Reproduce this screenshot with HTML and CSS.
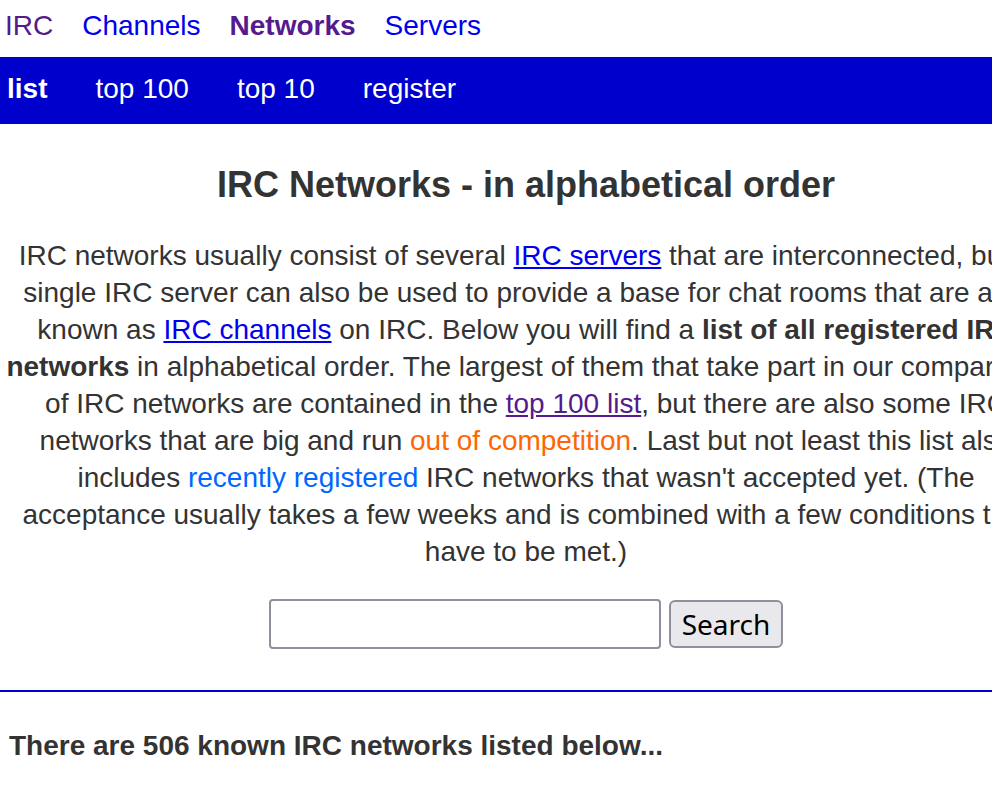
FILE: index.html
```html
<!DOCTYPE html>
<html lang="en">
<head>
    <meta charset="UTF-8">
    <title>IRC Networks - in alphabetical order</title>
    <link rel="stylesheet" href="styles.css">
</head>
<body>
    <div class="page">
        <nav class="topnav">
            <a href="#" class="visited">IRC</a>
            <a href="#">Channels</a>
            <a href="#" class="visited current">Networks</a>
            <a href="#">Servers</a>
        </nav>

        <nav class="subnav">
            <a href="#" class="current">list</a>
            <a href="#">top 100</a>
            <a href="#">top 10</a>
            <a href="#">register</a>
        </nav>

        <main class="content">
            <h1>IRC Networks - in alphabetical order</h1>

            <p class="intro">
                IRC networks usually consist of several <a href="#">IRC servers</a> that are interconnected, but a
                single IRC server can also be used to provide a base for chat rooms that are also known as
                <a href="#">IRC channels</a> on IRC. Below you will find a <b>list of all registered IRC networks</b>
                in alphabetical order. The largest of them that take part in our comparison of IRC networks are
                contained in the <a href="#" class="visited">top 100 list</a>, but there are also some IRC networks
                that are big and run <a href="#" class="ooc">out of competition</a>. Last but not least this list also
                includes <a href="#" class="recent">recently registered</a> IRC networks that wasn't accepted yet.
                (The acceptance usually takes a few weeks and is combined with a few conditions that have to be met.)
            </p>

            <form class="search" onsubmit="return false">
                <input type="text" name="q">
                <button type="submit">Search</button>
            </form>

            <hr>

            <h3 class="count">There are 506 known IRC networks listed below...</h3>
        </main>
    </div>
</body>
</html>
```

FILE: styles.css
```css
html, body {
    overflow-x: hidden;
}

body {
    margin: 0;
    font-family: "Liberation Sans", Arial, sans-serif;
    color: #333;
    background: #fff;
}

.page {
    width: 1052px;
}

a {
    color: #0000ee;
}

a.visited {
    color: #551a8b;
}

.topnav {
    display: flex;
    gap: 29px;
    padding: 10px 0 15px 5px;
    font-size: 28px;
    line-height: 32px;
}

.topnav a {
    text-decoration: none;
}

.topnav a.current {
    font-weight: bold;
}

.subnav {
    display: flex;
    gap: 48px;
    background: #0000cc;
    padding: 16px 0 19px 7px;
    font-size: 28px;
    line-height: 32px;
}

.subnav a {
    color: #fff;
    text-decoration: none;
}

.subnav a.current {
    font-weight: bold;
}

.content h1 {
    margin: 40px 0 0;
    font-size: 36px;
    line-height: 41px;
    text-align: center;
}

.intro {
    margin: 32px 0 0;
    padding: 0 4px;
    font-size: 28px;
    line-height: 37px;
    text-align: center;
}

.intro a.ooc {
    color: #ff6600;
    text-decoration: none;
}

.intro a.recent {
    color: #0066ff;
    text-decoration: none;
}

.search {
    display: flex;
    justify-content: center;
    align-items: center;
    gap: 8px;
    margin-top: 29px;
}

.search input {
    box-sizing: border-box;
    width: 392px;
    height: 50px;
    border: 2px solid #8f8f9d;
    border-radius: 4px;
    font-size: 28px;
    padding: 0 6px;
    background: #fff;
}

.search button {
    box-sizing: border-box;
    height: 48px;
    padding: 0 11px;
    border: 2px solid #8f8f9d;
    border-radius: 6px;
    background: #e9e9ed;
    color: #000;
    font-family: "Noto Sans", "Open Sans", sans-serif;
    font-size: 28px;
}

.content hr {
    margin: 41px 0 0;
    border: 0;
    height: 2px;
    background: #0000cc;
}

.count {
    margin: 38px 0 0;
    padding-left: 9px;
    font-size: 28px;
    line-height: 32px;
}
```
